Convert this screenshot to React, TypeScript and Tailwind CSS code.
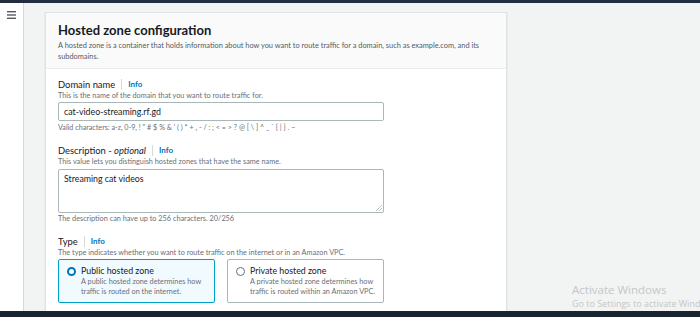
import React from "react";

function Label({ title, optional }: { title: string; optional?: boolean }) {
  return (
    <div className="flex items-center h-[13px] text-[9.4px] leading-[13px] text-[#16191f]">
      <span>
        {title}
        {optional && (
          <>
            {" - "}
            <i>optional</i>
          </>
        )}
      </span>
      <span className="mx-[6px] h-[11px] w-px bg-[#d5dbdb]" />
      <span className="text-[8px] font-bold text-[#0073bb]">Info</span>
    </div>
  );
}

function RadioCard({
  selected,
  title,
  lines,
}: {
  selected?: boolean;
  title: string;
  lines: string[];
}) {
  return (
    <div
      className={
        "flex w-[157px] h-[44px] rounded-[2px] border pl-[8px] pt-[5px] gap-[5px] " +
        (selected ? "border-[#00a1c9] bg-[#f1faff]" : "border-[#aab7b8] bg-white")
      }
    >
      {selected ? (
        <span className="mt-[2px] h-[9px] w-[9px] shrink-0 rounded-full border-[2.5px] border-[#0073bb] bg-white" />
      ) : (
        <span className="mt-[2px] h-[9px] w-[9px] shrink-0 rounded-full border border-[#687078] bg-white" />
      )}
      <div className="whitespace-nowrap">
        <div className="text-[8.8px] leading-[12px] text-[#16191f]">{title}</div>
        {lines.map((l) => (
          <div key={l} className="text-[7.3px] leading-[10px] text-[#687078]">
            {l}
          </div>
        ))}
      </div>
    </div>
  );
}

export default function App() {
  return (
    <div
      className="relative w-[700px] h-[317px] overflow-hidden bg-[#f2f3f3] flex flex-col"
      style={{ fontFamily: "Lato, sans-serif" }}
    >
      <div className="h-[3px] bg-[#232f3e]" />
      <div className="flex flex-1 min-h-0">
        {/* sidebar */}
        <div className="w-[24px] bg-white border-r border-[#d5dbdb] pt-[8px] flex justify-center">
          <svg width="9" height="8" viewBox="0 0 9 8">
            <rect x="0" y="0" width="9" height="1.4" fill="#545b64" />
            <rect x="0" y="3.3" width="9" height="1.4" fill="#545b64" />
            <rect x="0" y="6.6" width="9" height="1.4" fill="#545b64" />
          </svg>
        </div>

        <div className="flex-1 pl-[21px] pt-[9px]">
          <div className="w-[462px] h-[320px] bg-white border-r border-l border-t border-[#e0e3e3] shadow-[0_1px_1px_rgba(0,28,36,0.2)]">
            {/* header */}
            <div className="h-[56px] bg-[#fafafa] border-b border-[#eaeded] px-[12px] pt-[9px]">
              <div className="text-[13px] leading-[16px] font-bold text-[#16191f]">
                Hosted zone configuration
              </div>
              <div className="mt-[3px] text-[7.4px] leading-[10.5px] text-[#545b64] w-[430px]">
                A hosted zone is a container that holds information about how you want to route traffic for a domain, such as example.com, and its subdomains.
              </div>
            </div>

            {/* body */}
            <div className="px-[12px] pt-[9px]">
              <Label title="Domain name" />
              <div className="text-[7.3px] leading-[10px] text-[#687078]">
                This is the name of the domain that you want to route traffic for.
              </div>
              <div className="mt-[1px] w-[326px] h-[19px] rounded-[2px] border border-[#aab7b8] pl-[5px] flex items-center text-[8.8px] text-[#16191f]">
                cat-video-streaming.rf.gd
              </div>
              <div className="mt-[2px] text-[7.2px] leading-[10px] text-[#687078] whitespace-nowrap">
                Valid characters: a-z, 0-9, ! " # $ % &amp; ' ( ) * + , - / : ; &lt; = &gt; ? @ [ \ ] ^ _ ` {"{ | }"} . ~
              </div>

              <div className="mt-[11px]">
                <Label title="Description" optional />
              </div>
              <div className="text-[7.3px] leading-[10px] text-[#687078]">
                This value lets you distinguish hosted zones that have the same name.
              </div>
              <div className="relative mt-[2px] w-[326px] h-[44px] rounded-[2px] border border-[#aab7b8] pl-[5px] pt-[3px] text-[8.8px] leading-[12px] text-[#16191f]">
                Streaming cat videos
                <svg width="6" height="6" viewBox="0 0 6 6" className="absolute right-[1px] bottom-[1px]">
                  <line x1="0" y1="6" x2="6" y2="0" stroke="#aab7b8" strokeWidth="0.8" />
                  <line x1="3" y1="6" x2="6" y2="3" stroke="#aab7b8" strokeWidth="0.8" />
                </svg>
              </div>
              <div className="mt-[1px] text-[7.3px] leading-[10px] text-[#687078]">
                The description can have up to 256 characters. 20/256
              </div>

              <div className="mt-[11px]">
                <Label title="Type" />
              </div>
              <div className="text-[7.3px] leading-[10px] text-[#687078]">
                The type indicates whether you want to route traffic on the internet or in an Amazon VPC.
              </div>
              <div className="mt-[1px] flex gap-[12px]">
                <RadioCard
                  selected
                  title="Public hosted zone"
                  lines={["A public hosted zone determines how", "traffic is routed on the internet."]}
                />
                <RadioCard
                  title="Private hosted zone"
                  lines={["A private hosted zone determines how", "traffic is routed within an Amazon VPC."]}
                />
              </div>
            </div>
          </div>
        </div>
      </div>

      {/* windows watermark */}
      <div className="absolute left-[572px] top-[282px] text-[#c4c7c7] whitespace-nowrap" style={{ fontFamily: '"Open Sans", sans-serif' }}>
        <div className="text-[11.5px] leading-[15px]">Activate Windows</div>
        <div className="text-[9px] leading-[11px] mt-[1px]">Go to Settings to activate Windows.</div>
      </div>

      <div className="absolute left-0 bottom-0 w-full h-[6px] bg-[#1b2530]" />
    </div>
  );
}
